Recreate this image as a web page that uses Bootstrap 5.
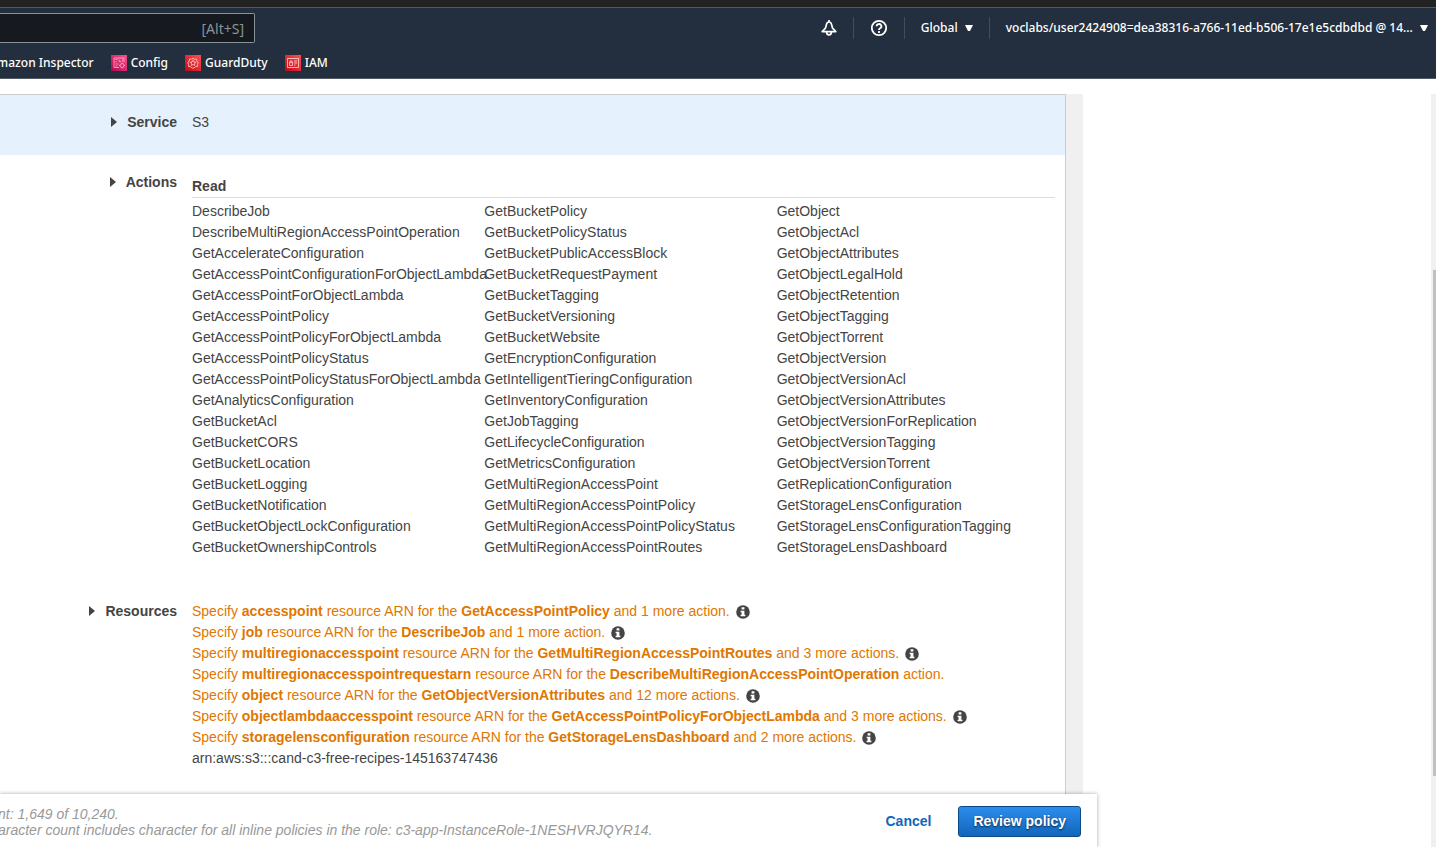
<!DOCTYPE html>
<html lang="en">
<head>
<meta charset="utf-8">
<meta name="viewport" content="width=device-width, initial-scale=1">
<title>Review policy</title>
<link href="https://cdn.jsdelivr.net/npm/bootstrap@5.3.0/dist/css/bootstrap.min.css" rel="stylesheet">
<style>
body{font-family:"Liberation Sans",Arial,sans-serif;font-size:14px;line-height:21px;color:#444;background:#fff;overflow-x:hidden}
.chrome-strip{height:8px;background:#222;border-bottom:1px solid #555a55}
.console-nav{background:#232f3e;border-bottom:1px solid #545b64;color:#fff;font-family:"Noto Sans","Open Sans",sans-serif;font-size:12px;font-weight:500}
.console-nav a,.console-nav button{color:#fff;text-decoration:none}
.nav-top{height:40px}
.search-box{width:255px;height:30px;border:1px solid #879596;border-left:0;border-radius:0 2px 2px 0;background:#16191f;color:#fff;font-size:14px;text-align:right;padding:0 10px 0 0}
.search-box::placeholder{color:#879596;opacity:1}
.plain-btn{background:none;border:0;padding:0;font-size:12px;font-weight:500;line-height:18px}
.sep{width:1px;height:22px;background:#414d5c}
.fav-row{height:30px;gap:17px;margin-left:-11px}
.fav-row a{display:flex;align-items:center;gap:4px;line-height:18px}
.policy-area{max-width:1083px;width:100%;background:#f0f0f0;margin-top:15px}
.policy-box{background:#fff;border:1px solid #ccc;border-width:1px 1px 0 0;margin-right:17px}
.policy-row{display:flex;gap:15px;padding:17px 10px 0 0}
.service-row{background:#e5f1fd;padding-bottom:22px}
.resource-row{padding-top:43px;padding-bottom:25px}
.label-col{flex:0 0 177px;text-align:right}
.label-col button{background:none;border:0;padding:0;color:#444;font-weight:700;line-height:21px;vertical-align:top}
.label-col svg{margin-right:10px;vertical-align:0}
.read-group{padding-top:4px}
.read-head{border-bottom:1px solid #ddd;font-size:14px;line-height:21px;font-weight:700;margin:0 0 3px}
.action-grid{display:grid;grid-template-columns:repeat(3,minmax(0,1fr));column-gap:14px}
.action-grid ul{white-space:nowrap}
.warn{color:#e07700}
.info{margin-left:2px;vertical-align:-3px}
.page-foot{max-width:1097px;width:100%;background:#fff;box-shadow:0 0 4px rgba(0,0,0,.35);padding:12px 16px 10px 0}
.foot-note{font-style:italic;color:#999;line-height:16px;margin-left:-2px}
.foot-actions{gap:27px}
.cancel-link{color:#1166bb;font-weight:700;text-decoration:none}
.review-btn{background:linear-gradient(#2e8cec,#1166bb);border:1px solid #0b4a8a;border-radius:3px;color:#fff;font-weight:700;font-size:14px;line-height:21px;padding:4px 14px;text-shadow:0 1px 2px rgba(0,0,0,.7)}
.track{position:fixed;right:0;top:94px;bottom:0;width:5px;background:#f0f0f0;padding:176px 0 71px 2px}
.thumb{background:#c1c1c1;height:100%}
</style>
</head>
<body class="d-flex flex-column min-vh-100">
<svg class="d-none" aria-hidden="true">
  <symbol id="tri" viewBox="0 0 6 10"><path d="M0 0l6 5-6 5z" fill="#444"/></symbol>
  <symbol id="caret" viewBox="0 0 8 7"><path d="M0 0h8L5 6H3z" fill="#fff"/></symbol>
  <symbol id="inf" viewBox="0 0 14 14"><circle cx="7" cy="7" r="6.800" fill="#444"/><path d="M5.600 2.300h2.800v2.200H5.600zM4.600 5.700h3.800v4h1v1.600H4.600V9.700h1V7.200h-1z" fill="#fff"/></symbol>
</svg>
<div class="chrome-strip"></div>
<header class="console-nav">
  <div class="nav-top d-flex align-items-center justify-content-between">
    <input class="search-box" type="text" aria-label="Search" placeholder="[Alt+S]">
    <div class="d-flex align-items-center">
      <button class="plain-btn d-flex" aria-label="Notifications"><svg width="16" height="16" viewBox="0 0 16 16" fill="none" stroke="#fff" stroke-width="1.700" stroke-linejoin="round"><path d="M8 0v2M1.200 11.600h13.600L11.500 8 10.600 4.600C10.200 3 9.400 2 8 2S5.800 3 5.400 4.600L4.500 8zM5.600 12a2.400 2.900 0 0 0 4.800 0"/></svg></button>
      <span class="sep mx-3"></span>
      <button class="plain-btn d-flex" aria-label="Help"><svg width="18" height="18" viewBox="0 0 18 18" fill="none" stroke="#fff" stroke-width="1.800"><circle cx="9" cy="9" r="7.200"/><path d="M6.600 7.300a2.400 2.200 0 1 1 3.500 1.900Q9 9.800 9 11M9 12v2"/></svg></button>
      <span class="sep mx-3"></span>
      <button class="plain-btn">Global <svg class="ms-1" width="8" height="7" aria-hidden="true"><use href="#caret"/></svg></button>
      <span class="sep mx-3"></span>
      <button class="plain-btn me-2">voclabs/user2424908=dea38316-a766-11ed-b506-17e1e5cdbdbd @ 14... <svg class="ms-1" width="8" height="7" aria-hidden="true"><use href="#caret"/></svg></button>
    </div>
  </div>
  <nav class="fav-row d-flex align-items-center" aria-label="Favorites">
    <a href="#">Amazon Inspector</a>
    <a href="#"><svg width="16" height="16" viewBox="0 0 16 16"><defs><linearGradient id="pk" x1="0" y1="1" x2="1" y2="0"><stop stop-color="#b0084d"/><stop offset="1" stop-color="#ff4f8b"/></linearGradient></defs><path d="M0 0h16v16H0z" fill="url(#pk)"/><g fill="none" stroke="#ffb0d0" stroke-width=".8"><path d="M8 12.500H3V3h10v4M4.500 4.500h2M8 4.500v2h2M11.500 4.500v2M5 6v1.500M4.500 9h3M4.500 11h2"/><circle cx="11" cy="10.500" r="2"/><path d="M11 7.500v1M11 12.500v1M8 10.500h1M13 10.500h1"/></g></svg>Config</a>
    <a href="#"><svg width="16" height="16" viewBox="0 0 16 16"><defs><linearGradient id="rd" x1="0" y1="1" x2="1" y2="0"><stop stop-color="#bd0816"/><stop offset="1" stop-color="#ff5252"/></linearGradient></defs><path d="M0 0h16v16H0z" fill="url(#rd)"/><g fill="none" stroke="#ffc0c0" stroke-width=".9"><path d="M8 3l1.400 1.200 2-.2.500 2L13.200 7.700l-.8 1.800.1 2-2 .2L8.800 13H7.200l-1.700-1.300-2-.2.100-2-.8-1.800L4.100 6l.500-2 2 .2z"/><circle cx="8" cy="8" r="1.900"/><path d="M8 4.500v1.600M4.600 7l1.600.5M11.400 7l-1.600.5M6 11l.8-1.400M10 11l-.8-1.400"/></g></svg>GuardDuty</a>
    <a href="#"><svg width="16" height="16" viewBox="0 0 16 16"><path d="M0 0h16v16H0z" fill="url(#rd)"/><g fill="none" stroke="#ffc0c0" stroke-width=".9"><path d="M2.500 3.500h11v9h-11zM4.500 7.500h3v3h-3zM5 7.500V6h2v1.500M9 6h3M9 8h3M9 10h1.500"/></g></svg>IAM</a>
  </nav>
</header>

<main class="policy-area flex-grow-1 d-flex flex-column">
  <div class="policy-box flex-grow-1">
    <section class="policy-row service-row">
      <div class="label-col"><button><svg width="6" height="10" aria-hidden="true"><use href="#tri"/></svg>Service</button></div>
      <div>S3</div>
    </section>
    <section class="policy-row">
      <div class="label-col"><button><svg width="6" height="10" aria-hidden="true"><use href="#tri"/></svg>Actions</button></div>
      <div class="read-group flex-grow-1">
        <h2 class="read-head">Read</h2>
        <div class="action-grid">
          <ul class="list-unstyled mb-0">
            <li>DescribeJob</li><li>DescribeMultiRegionAccessPointOperation</li><li>GetAccelerateConfiguration</li><li>GetAccessPointConfigurationForObjectLambda</li><li>GetAccessPointForObjectLambda</li><li>GetAccessPointPolicy</li><li>GetAccessPointPolicyForObjectLambda</li><li>GetAccessPointPolicyStatus</li><li>GetAccessPointPolicyStatusForObjectLambda</li><li>GetAnalyticsConfiguration</li><li>GetBucketAcl</li><li>GetBucketCORS</li><li>GetBucketLocation</li><li>GetBucketLogging</li><li>GetBucketNotification</li><li>GetBucketObjectLockConfiguration</li><li>GetBucketOwnershipControls</li>
          </ul>
          <ul class="list-unstyled mb-0">
            <li>GetBucketPolicy</li><li>GetBucketPolicyStatus</li><li>GetBucketPublicAccessBlock</li><li>GetBucketRequestPayment</li><li>GetBucketTagging</li><li>GetBucketVersioning</li><li>GetBucketWebsite</li><li>GetEncryptionConfiguration</li><li>GetIntelligentTieringConfiguration</li><li>GetInventoryConfiguration</li><li>GetJobTagging</li><li>GetLifecycleConfiguration</li><li>GetMetricsConfiguration</li><li>GetMultiRegionAccessPoint</li><li>GetMultiRegionAccessPointPolicy</li><li>GetMultiRegionAccessPointPolicyStatus</li><li>GetMultiRegionAccessPointRoutes</li>
          </ul>
          <ul class="list-unstyled mb-0">
            <li>GetObject</li><li>GetObjectAcl</li><li>GetObjectAttributes</li><li>GetObjectLegalHold</li><li>GetObjectRetention</li><li>GetObjectTagging</li><li>GetObjectTorrent</li><li>GetObjectVersion</li><li>GetObjectVersionAcl</li><li>GetObjectVersionAttributes</li><li>GetObjectVersionForReplication</li><li>GetObjectVersionTagging</li><li>GetObjectVersionTorrent</li><li>GetReplicationConfiguration</li><li>GetStorageLensConfiguration</li><li>GetStorageLensConfigurationTagging</li><li>GetStorageLensDashboard</li>
          </ul>
        </div>
      </div>
    </section>
    <section class="policy-row resource-row">
      <div class="label-col"><button><svg width="6" height="10" aria-hidden="true"><use href="#tri"/></svg>Resources</button></div>
      <div>
        <div class="warn">Specify <b>accesspoint</b> resource ARN for the <b>GetAccessPointPolicy</b> and 1 more action. <svg class="info" width="14" height="14" role="img" aria-label="Info"><use href="#inf"/></svg></div>
        <div class="warn">Specify <b>job</b> resource ARN for the <b>DescribeJob</b> and 1 more action. <svg class="info" width="14" height="14" role="img" aria-label="Info"><use href="#inf"/></svg></div>
        <div class="warn">Specify <b>multiregionaccesspoint</b> resource ARN for the <b>GetMultiRegionAccessPointRoutes</b> and 3 more actions. <svg class="info" width="14" height="14" role="img" aria-label="Info"><use href="#inf"/></svg></div>
        <div class="warn">Specify <b>multiregionaccesspointrequestarn</b> resource ARN for the <b>DescribeMultiRegionAccessPointOperation</b> action.</div>
        <div class="warn">Specify <b>object</b> resource ARN for the <b>GetObjectVersionAttributes</b> and 12 more actions. <svg class="info" width="14" height="14" role="img" aria-label="Info"><use href="#inf"/></svg></div>
        <div class="warn">Specify <b>objectlambdaaccesspoint</b> resource ARN for the <b>GetAccessPointPolicyForObjectLambda</b> and 3 more actions. <svg class="info" width="14" height="14" role="img" aria-label="Info"><use href="#inf"/></svg></div>
        <div class="warn">Specify <b>storagelensconfiguration</b> resource ARN for the <b>GetStorageLensDashboard</b> and 2 more actions. <svg class="info" width="14" height="14" role="img" aria-label="Info"><use href="#inf"/></svg></div>
        <div>arn:aws:s3:::cand-c3-free-recipes-145163747436</div>
      </div>
    </section>
  </div>
</main>

<footer class="page-foot sticky-bottom d-flex justify-content-between align-items-start">
  <div class="foot-note">nt: 1,649 of 10,240.<br>aracter count includes character for all inline policies in the role: c3-app-InstanceRole-1NESHVRJQYR14.</div>
  <div class="foot-actions d-flex align-items-center">
    <a class="cancel-link" href="#">Cancel</a>
    <button class="review-btn">Review policy</button>
  </div>
</footer>
<div class="track"><div class="thumb"></div></div>
<script src="https://cdn.jsdelivr.net/npm/bootstrap@5.3.0/dist/js/bootstrap.bundle.min.js"></script>
</body>
</html>
